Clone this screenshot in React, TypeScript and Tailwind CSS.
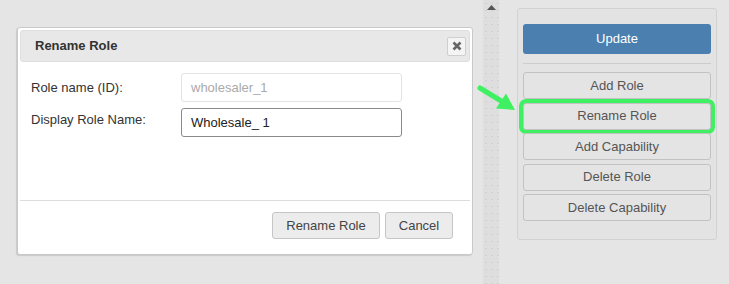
import React from "react";

const font = { fontFamily: '"Liberation Sans", Arial, sans-serif' };

function SideButton({ label, highlight }: { label: string; highlight?: boolean }) {
  return (
    <button
      className={
        "h-[27px] w-full rounded-[3px] border border-[#c2c2c2] bg-[#e4e4e4] text-[13px] text-[#555] flex items-center justify-center" +
        (highlight ? " ring-[4px] ring-[#3ff063]" : "")
      }
    >
      {label}
    </button>
  );
}

export default function App() {
  return (
    <div
      className="relative w-[729px] h-[284px] bg-[#e5e5e5] overflow-hidden flex items-start"
      style={font}
    >
      {/* Dialog */}
      <div className="ml-[17px] mt-[27px] w-[456px] h-[228px] bg-white border border-[#c9c9c9] rounded-[3px] p-[2px] flex flex-col shadow-[-1px_1px_1px_rgba(0,0,0,0.12)]">
        <div className="h-[32px] shrink-0 bg-[#e8e8e8] border border-[#dedede] rounded-[3px] flex items-center justify-between pl-[14px] pr-[3px]">
          <span className="text-[13px] font-bold text-[#333]">Rename Role</span>
          <button className="w-[19px] h-[19px] bg-[#f4f4f4] border border-[#cfcfcf] rounded-[2px] flex items-center justify-center">
            <svg width="10" height="10" viewBox="0 0 10 10">
              <path d="M1.5 1.5 L8.5 8.5 M8.5 1.5 L1.5 8.5" stroke="#666" strokeWidth="2.6" strokeLinecap="butt" />
            </svg>
          </button>
        </div>
        <div className="h-[139px] shrink-0 pt-[11px] pl-[11px] flex flex-col gap-[6px] border-b border-[#dddddd]">
          <div className="flex items-center">
            <label className="w-[150px] text-[13px] text-[#333]">Role name (ID):</label>
            <div className="w-[221px] h-[29px] border border-[#e3e3e3] rounded-[3px] flex items-center pl-[9px] text-[13px] text-[#aaaaaa]">
              wholesaler_1
            </div>
          </div>
          <div className="flex items-center">
            <label className="w-[150px] text-[13px] text-[#333] -mt-[6px]">Display Role Name:</label>
            <div className="w-[221px] h-[29px] border border-[#8a8a8a] rounded-[3px] flex items-center pl-[9px] text-[13px] text-[#222]">
              Wholesale_ 1
            </div>
          </div>
        </div>
        <div className="flex justify-end gap-[5px] pt-[11px] pr-[17px]">
          <button className="h-[27px] w-[108px] border border-[#c6c6c6] rounded-[3px] bg-[#ececec] text-[13px] text-[#444]">
            Rename Role
          </button>
          <button className="h-[27px] w-[68px] border border-[#c6c6c6] rounded-[3px] bg-[#ececec] text-[13px] text-[#444]">
            Cancel
          </button>
        </div>
      </div>

      {/* Scroll strip */}
      <div
        className="ml-[10px] w-[16px] h-[284px] bg-[#dedede] flex justify-center pt-[5px]"
        style={{
          backgroundImage: "radial-gradient(circle, #d0d0d0 0.6px, transparent 0.8px)",
          backgroundSize: "6px 7px",
        }}
      >
        <svg width="9" height="5" viewBox="0 0 9 5">
          <path d="M0 5 L4.5 0 L9 5 Z" fill="#555" />
        </svg>
      </div>

      {/* Right panel */}
      <div className="ml-[18px] mt-[8px] w-[200px] h-[232px] border border-[#d2d2d2] rounded-[3px] bg-[#e3e3e3] pt-[15px] pl-[5px] pr-[5px] flex flex-col">
        <button className="h-[30px] w-full rounded-[3px] bg-[#4a7fb0] text-white text-[13px]">Update</button>
        <div className="mt-[9px] h-px bg-[#cccccc]" />
        <div className="mt-[8px] flex flex-col gap-[3.5px]">
          <SideButton label="Add Role" />
          <SideButton label="Rename Role" highlight />
          <SideButton label="Add Capability" />
          <SideButton label="Delete Role" />
          <SideButton label="Delete Capability" />
        </div>
      </div>

      {/* Green arrow overlay */}
      <svg className="absolute left-0 top-0 pointer-events-none" width="729" height="284">
        <line x1="480" y1="88" x2="502" y2="101.5" stroke="#3ff063" strokeWidth="5" strokeLinecap="round" />
        <path d="M515 110 L496 108.5 L506 93.5 Z" fill="#3ff063" />
      </svg>
    </div>
  );
}
